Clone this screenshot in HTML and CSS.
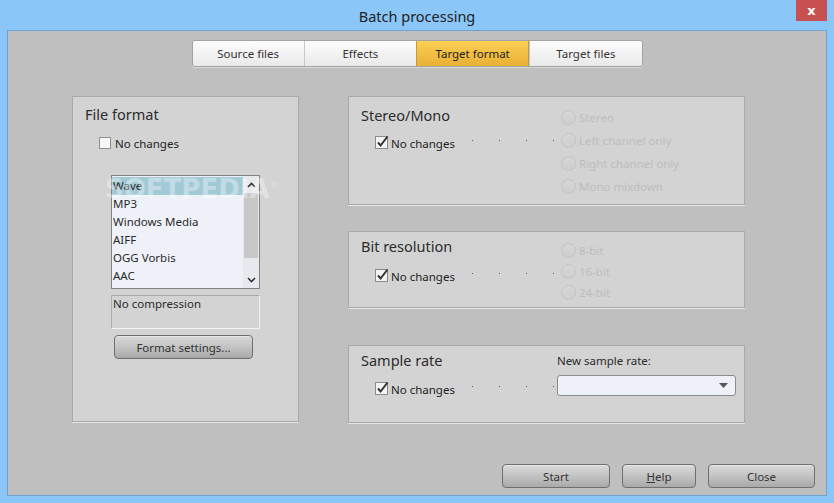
FILE: index.html
```html
<!DOCTYPE html>
<html lang="en">

<head>
      <meta charset="UTF-8">
      <meta name="viewport" content="width=device-width, initial-scale=1.0">
      <title>Batch processing</title>
      <link rel="stylesheet" href="styles.css">
</head>

<body>
      <div class="window">
            <div class="titlebar">
                  <span class="title">Batch processing</span>
                  <button class="close" type="button">x</button>
            </div>

            <div class="client">
                  <!-- tab strip -->
                  <div class="tabs">
                        <span class="tab">Source files</span>
                        <span class="tab">Effects</span>
                        <span class="tab active">Target format</span>
                        <span class="tab">Target files</span>
                  </div>

                  <div class="main">
                        <!-- File format -->
                        <div class="panel format">
                              <h2 class="panelTitle">File format</h2>
                              <label class="check">
                                    <span class="box"></span>
                                    No changes
                              </label>

                              <div class="listbox">
                                    <ul class="items">
                                          <li class="selected">Wave</li>
                                          <li>MP3</li>
                                          <li>Windows Media</li>
                                          <li>AIFF</li>
                                          <li>OGG Vorbis</li>
                                          <li>AAC</li>
                                    </ul>
                                    <div class="scrollbar">
                                          <span class="arrow">
                                                <svg width="9" height="6" viewBox="0 0 9 6">
                                                      <path d="M1 5 L4.5 1.5 L8 5" fill="none" stroke="#333" stroke-width="1.6" />
                                                </svg>
                                          </span>
                                          <span class="thumb"></span>
                                          <span class="arrow down">
                                                <svg width="9" height="6" viewBox="0 0 9 6">
                                                      <path d="M1 1 L4.5 4.5 L8 1" fill="none" stroke="#333" stroke-width="1.6" />
                                                </svg>
                                          </span>
                                    </div>
                              </div>
                              <span class="watermark">SOFTPEDIA<sup>&reg;</sup></span>

                              <div class="info">No compression</div>
                              <button class="btn settings" type="button">Format settings...</button>
                        </div>

                        <div class="rightCol">
                              <!-- Stereo/Mono -->
                              <div class="panel stereo">
                                    <div class="left">
                                          <h2 class="panelTitle">Stereo/Mono</h2>
                                          <label class="check">
                                                <svg class="box checked" width="14" height="14" viewBox="0 0 14 14">
                                                      <rect x="0.5" y="1.5" width="12" height="12" fill="#f3f3f3" stroke="#8a8a8a" />
                                                      <path d="M3 7.5 L5.6 10.5 L12.5 1.5" fill="none" stroke="#333" stroke-width="2" />
                                                </svg>
                                                No changes
                                                <span class="dots"><i></i><i></i><i></i><i></i></span>
                                          </label>
                                    </div>
                                    <div class="radios">
                                          <span class="radio"><span class="dot"></span>Stereo</span>
                                          <span class="radio"><span class="dot"></span>Left channel only</span>
                                          <span class="radio"><span class="dot"></span>Right channel only</span>
                                          <span class="radio"><span class="dot"></span>Mono mixdown</span>
                                    </div>
                              </div>

                              <!-- Bit resolution -->
                              <div class="panel bits">
                                    <div class="left">
                                          <h2 class="panelTitle">Bit resolution</h2>
                                          <label class="check">
                                                <svg class="box checked" width="14" height="14" viewBox="0 0 14 14">
                                                      <rect x="0.5" y="1.5" width="12" height="12" fill="#f3f3f3" stroke="#8a8a8a" />
                                                      <path d="M3 7.5 L5.6 10.5 L12.5 1.5" fill="none" stroke="#333" stroke-width="2" />
                                                </svg>
                                                No changes
                                                <span class="dots"><i></i><i></i><i></i><i></i></span>
                                          </label>
                                    </div>
                                    <div class="radios">
                                          <span class="radio"><span class="dot"></span>8-bit</span>
                                          <span class="radio"><span class="dot"></span>16-bit</span>
                                          <span class="radio"><span class="dot"></span>24-bit</span>
                                    </div>
                              </div>

                              <!-- Sample rate -->
                              <div class="panel rate">
                                    <div class="left">
                                          <h2 class="panelTitle">Sample rate</h2>
                                          <label class="check">
                                                <svg class="box checked" width="14" height="14" viewBox="0 0 14 14">
                                                      <rect x="0.5" y="1.5" width="12" height="12" fill="#f3f3f3" stroke="#8a8a8a" />
                                                      <path d="M3 7.5 L5.6 10.5 L12.5 1.5" fill="none" stroke="#333" stroke-width="2" />
                                                </svg>
                                                No changes
                                                <span class="dots"><i></i><i></i><i></i><i></i></span>
                                          </label>
                                    </div>
                                    <div class="rateBox">
                                          <span class="rateLabel">New sample rate:</span>
                                          <div class="combo">
                                                <svg width="9" height="5" viewBox="0 0 9 5">
                                                      <path d="M0 0 H9 L4.5 5 Z" fill="#555" />
                                                </svg>
                                          </div>
                                    </div>
                              </div>
                        </div>
                  </div>

                  <div class="actions">
                        <button class="btn start" type="button">Start</button>
                        <button class="btn help" type="button"><u>H</u>elp</button>
                        <button class="btn closeBtn" type="button">Close</button>
                  </div>
            </div>
      </div>
</body>

</html>
```

FILE: styles.css
```css
/* page */
body {
      margin: 0;
      font-family: "Noto Sans", "Open Sans", sans-serif;
      font-size: 11.5px;
      color: #222;
}

/* window frame */
div.window {
      width: 834px;
      height: 503px;
      box-sizing: border-box;
      padding: 0 7px 7px 7px;
      background-color: #8ac6f8;
      display: flex;
      flex-direction: column;
}

div.titlebar {
      height: 30px;
      display: flex;
      align-items: center;
      justify-content: center;
      position: relative;
}

.title {
      font-size: 14.5px;
      color: #222;
      margin-top: 2px;
}

button.close {
      position: absolute;
      top: 0;
      right: 0;
      width: 31px;
      height: 21px;
      border: none;
      padding: 0;
      background-color: #c75050;
      color: white;
      font-family: "DejaVu Sans", sans-serif;
      font-size: 13px;
      font-weight: bold;
      line-height: 19px;
}

div.client {
      flex: 1;
      border: 1px solid #6ea2d2;
      background-color: #bfbfbf;
      display: flex;
      flex-direction: column;
}

/* tabs */
div.tabs {
      align-self: center;
      margin-top: 9px;
      width: 451px;
      height: 27px;
      box-sizing: border-box;
      border: 1px solid #a3a3a3;
      border-radius: 3px;
      display: flex;
      overflow: hidden;
      box-shadow: 0 1px 0 #d8d8d8;
}

.tab {
      flex: 1;
      display: flex;
      align-items: center;
      justify-content: center;
      background: linear-gradient(#fdfdfd, #e9e9e9);
      border-left: 1px solid #c9c9c9;
      color: #333;
}

.tab:first-child {
      border-left: none;
}

.tab.active {
      background: linear-gradient(#fbcf55, #e9b035);
      border-left: 1px solid #c29a3e;
      border-right: 1px solid #c29a3e;
      color: #1e1e1e;
}

/* main area */
div.main {
      display: flex;
      margin-top: 29px;
      padding-left: 64px;
}

div.panel {
      box-sizing: border-box;
      background-color: #d3d3d3;
      border: 1px solid #a9a9a9;
      box-shadow: 0 1px 0 #e6e6e6;
      position: relative;
}

h2.panelTitle {
      margin: 0;
      font-size: 14.5px;
      font-weight: normal;
      line-height: 20px;
      color: #2c2c2c;
}

label.check {
      display: flex;
      align-items: center;
      height: 16px;
      color: #222;
}

.box {
      width: 12px;
      height: 12px;
      margin-right: 4px;
      box-sizing: border-box;
      border: 1px solid #8f8f8f;
      background-color: #f6f6f6;
}

svg.box {
      width: 14px;
      height: 14px;
      border: none;
      background: none;
      margin-right: 2px;
      margin-top: -2px;
}

.dots {
      display: flex;
      gap: 26px;
      margin-left: 17px;
      margin-top: -5px;
}

.dots i {
      width: 1px;
      height: 1px;
      background-color: #555;
}

/* file format panel */
div.format {
      width: 227px;
      height: 326px;
      padding: 7px 0 0 12px;
}

div.format label.check {
      margin: 11px 0 0 14px;
}

div.listbox {
      margin: 24px 0 0 26px;
      width: 149px;
      height: 114px;
      box-sizing: border-box;
      border: 1px solid #7f8389;
      background-color: #eef2f8;
      display: flex;
      padding: 1px 0 0 0;
}

ul.items {
      list-style: none;
      margin: 0;
      padding: 0;
      flex: 1;
}

ul.items li {
      height: 18px;
      line-height: 18px;
      padding-left: 1px;
      color: #2a2a2a;
}

ul.items li.selected {
      background-color: #a2cad6;
}

div.scrollbar {
      width: 16px;
      display: flex;
      flex-direction: column;
      background-color: #e7e9ec;
      margin-top: -1px;
}

.arrow {
      height: 17px;
      display: flex;
      align-items: center;
      justify-content: center;
}

.arrow.down {
      margin-top: auto;
}

.thumb {
      height: 65px;
      margin: 0 1px;
      background-color: #c8c8c8;
}

.watermark {
      position: absolute;
      left: 32px;
      top: 77px;
      font-family: "DejaVu Sans", sans-serif;
      font-weight: bold;
      font-size: 26px;
      color: rgba(255, 255, 255, 0.35);
      pointer-events: none;
}

.watermark sup {
      font-size: 9px;
      font-weight: normal;
}

div.info {
      margin: 6px 0 0 26px;
      width: 149px;
      height: 34px;
      box-sizing: border-box;
      border: 1px solid #ababab;
      border-right-color: #f4f4f4;
      border-bottom-color: #f4f4f4;
      padding-left: 1px;
      line-height: 16px;
      color: #2a2a2a;
}

button.btn {
      height: 24px;
      box-sizing: border-box;
      border: 1px solid #6f6f6f;
      border-radius: 4px;
      background: linear-gradient(#d9d9d9, #c3c3c3 50%, #a9a9a9);
      font-family: "Noto Sans", "Open Sans", sans-serif;
      font-size: 11.5px;
      color: #333;
      padding: 0;
      box-shadow: inset 0 1px 0 #e8e8e8;
}

button.settings {
      width: 139px;
      margin: 6px 0 0 29px;
}

/* right column */
div.rightCol {
      width: 397px;
      margin-left: 49px;
      display: flex;
      flex-direction: column;
}

div.rightCol div.panel {
      display: flex;
      padding-left: 12px;
}

div.left {
      width: 200px;
}

div.left label.check {
      margin-left: 14px;
}

div.radios {
      display: flex;
      flex-direction: column;
}

.radio {
      display: flex;
      align-items: center;
      height: 16px;
      color: #bdbdbd;
}

.radio .dot {
      width: 13px;
      height: 13px;
      border-radius: 50%;
      border: 1px solid #c4c4c4;
      background: linear-gradient(#d6d6d6, #cecece);
      margin-right: 3px;
}

div.stereo {
      height: 109px;
      padding-top: 8px;
}

div.stereo label.check {
      margin-top: 10px;
}

div.stereo div.radios {
      margin-top: 4px;
      gap: 7px;
}

div.bits {
      height: 77px;
      margin-top: 26px;
      padding-top: 4px;
}

div.bits label.check {
      margin-top: 12px;
}

div.bits div.radios {
      margin-top: 6px;
      gap: 5px;
}

div.rate {
      height: 78px;
      margin-top: 37px;
      padding-top: 4px;
}

div.rate label.check {
      margin-top: 11px;
}

div.rateBox {
      display: flex;
      flex-direction: column;
      margin-left: -4px;
}

.rateLabel {
      line-height: 20px;
      margin-top: 1px;
      color: #2a2a2a;
}

div.combo {
      margin-top: 4px;
      width: 179px;
      height: 21px;
      box-sizing: border-box;
      border: 1px solid #8c8c8c;
      border-radius: 3px;
      background-color: #eef2f8;
      display: flex;
      align-items: center;
      justify-content: flex-end;
      padding-right: 7px;
}

/* bottom buttons */
div.actions {
      display: flex;
      justify-content: flex-end;
      gap: 12px;
      margin-top: 41px;
      padding-right: 11px;
}

button.start {
      width: 108px;
}

button.help {
      width: 74px;
}

button.closeBtn {
      width: 107px;
}
```
